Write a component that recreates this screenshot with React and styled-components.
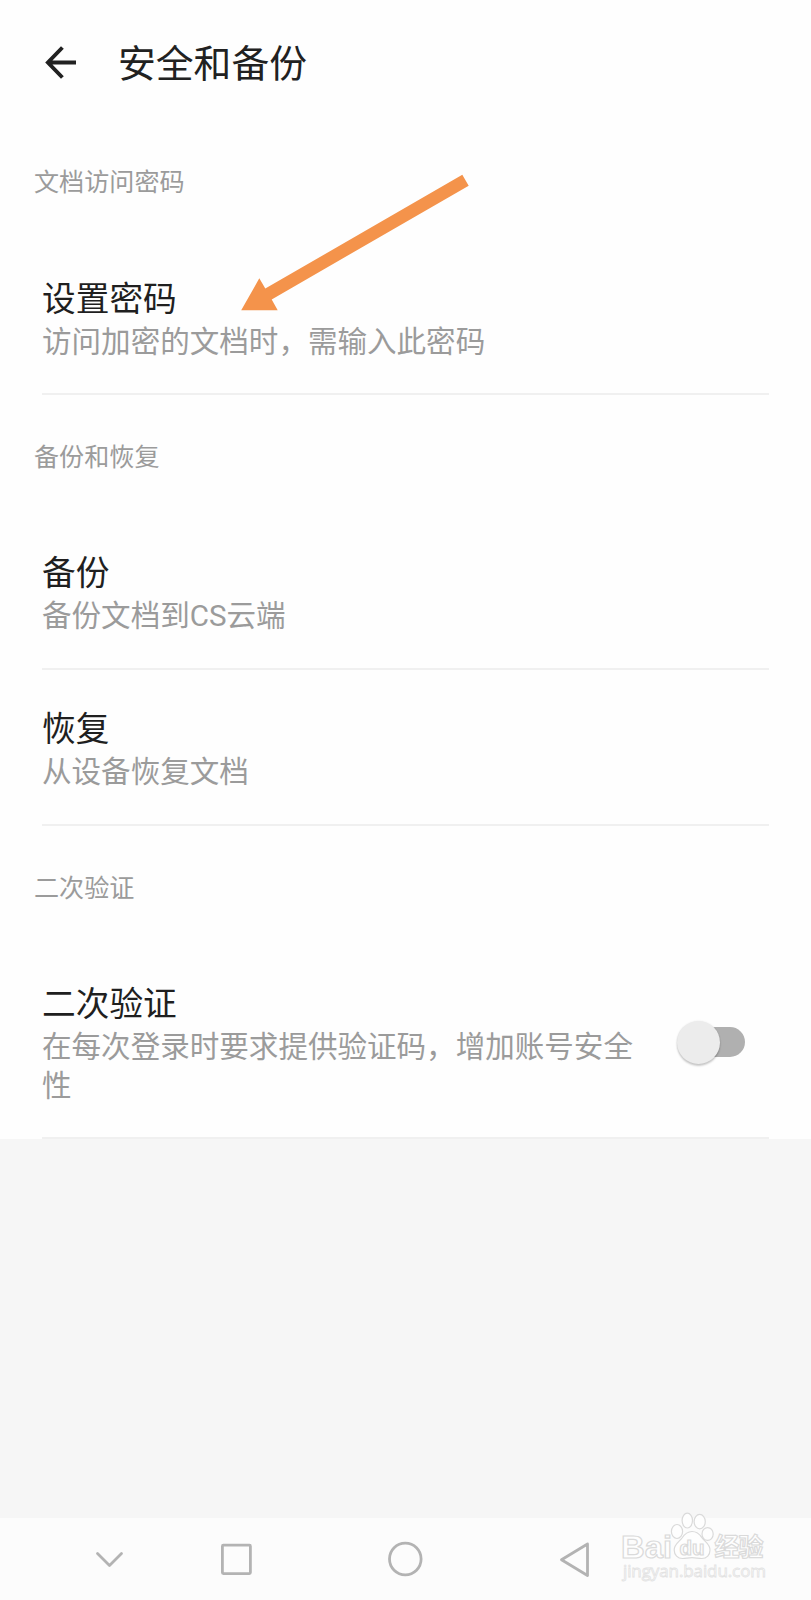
import React from "react";
import styled, { createGlobalStyle } from "styled-components";

const GlobalStyle = createGlobalStyle`
  * { box-sizing: border-box; }
  html, body { margin: 0; padding: 0; }
  body {
    background: #f6f6f6;
    font-family: Roboto, "Noto Sans CJK SC", sans-serif;
    font-weight: 400;
  }
`;

const Screen = styled.div`
  position: relative;
  display: flex;
  flex-direction: column;
  width: 811px;
  height: 1600px;
  overflow: hidden;
  background: #f6f6f6;
`;

const Panel = styled.main`
  display: flex;
  flex-direction: column;
  height: 1139px;
  flex: none;
  background: #fefefe;
`;

const Header = styled.header`
  display: flex;
  align-items: center;
  gap: 40px;
  height: 120px;
  padding: 5px 45px 0 44px;
  flex: none;
`;

const BackButton = styled.button`
  display: flex;
  width: 34px;
  height: 34px;
  padding: 0;
  border: 0;
  background: none;
`;

const Title = styled.h1`
  margin: 0;
  padding-top: 2px;
  font-size: 37.8px;
  line-height: 56px;
  font-weight: 400;
  color: #212121;
`;

const SectionLabel = styled.h2`
  height: 119px;
  margin: 0;
  padding: 45px 34px 0;
  flex: none;
  font-size: 25.1px;
  line-height: 36px;
  font-weight: 400;
  color: #9b9b9b;
`;

const Item = styled.section`
  display: flex;
  align-items: center;
  justify-content: space-between;
  flex: none;
  margin: 0 42px;
  padding: 36.6px 24px 31.8px 0;
  border-bottom: 2px solid #f0f0f0;
`;

const ItemText = styled.div`
  width: 600px;
`;

const ItemTitle = styled.div`
  font-size: 33.7px;
  line-height: 47px;
  color: #1f1f1f;
`;

const ItemDesc = styled.div`
  font-size: 29.55px;
  line-height: 38.5px;
  color: #9b9b9b;
`;

const SwitchTrack = styled.button`
  display: flex;
  align-items: center;
  width: 61px;
  height: 30px;
  margin-bottom: 2px;
  padding: 0;
  border: 0;
  border-radius: 15px;
  background: #b0b0b0;
`;

const SwitchThumb = styled.span`
  flex: none;
  width: 43px;
  height: 43px;
  margin-left: -7px;
  border-radius: 50%;
  background: #ececec;
  box-shadow: 0 2px 2px rgba(0, 0, 0, 0.2), 0 0 2px rgba(0, 0, 0, 0.1);
`;

const Filler = styled.div`
  flex: 1;
`;

const NavBar = styled.nav`
  display: flex;
  align-items: center;
  height: 82px;
  flex: none;
  padding-left: 92px;
  background: #fcfcfc;
`;

const NavButton = styled.button`
  display: flex;
  width: 36px;
  height: 40px;
  margin-right: ${(p) => p.$gap || 0}px;
  padding: 0;
  border: 0;
  background: none;
  flex: none;

  svg {
    fill: none;
    stroke: #b3b3b3;
    stroke-width: 2.8;
    stroke-linejoin: round;
    stroke-linecap: round;
  }
`;

const Pointer = styled.svg`
  position: absolute;
  left: 220px;
  top: 160px;
  pointer-events: none;
`;

const Watermark = styled.svg`
  position: absolute;
  left: 615px;
  top: 1508px;
  pointer-events: none;
  font-family: "Liberation Sans", "Noto Sans CJK SC", sans-serif;
  fill: #fefefe;
  stroke: #dadada;
  stroke-width: 1.2px;
`;

const WatermarkUrl = styled.text`
  font-family: "Open Sans", sans-serif;
  font-size: 17px;
  stroke: #e2e2e2;
  stroke-width: 0.8px;
`;

const Setting = ({ title, desc, children }) => (
  <Item>
    <ItemText>
      <ItemTitle>{title}</ItemTitle>
      <ItemDesc>{desc}</ItemDesc>
    </ItemText>
    {children}
  </Item>
);

export default function App() {
  return (
    <Screen lang="zh-CN">
      <GlobalStyle />
      <Panel>
        <Header>
          <BackButton aria-label="返回">
            <svg width="34" height="34" viewBox="0 0 34 34" fill="none" stroke="#212121" strokeWidth="3.9">
              <path d="M32 16.500H4M18.400 1.500 3.900 16.500l14.500 15" />
            </svg>
          </BackButton>
          <Title>安全和备份</Title>
        </Header>
        <SectionLabel>文档访问密码</SectionLabel>
        <Setting title="设置密码" desc="访问加密的文档时，需输入此密码" />
        <SectionLabel>备份和恢复</SectionLabel>
        <Setting title="备份" desc="备份文档到CS云端" />
        <Setting title="恢复" desc="从设备恢复文档" />
        <SectionLabel>二次验证</SectionLabel>
        <Setting title="二次验证" desc="在每次登录时要求提供验证码，增加账号安全性">
          <SwitchTrack role="switch" aria-checked="false" aria-label="二次验证">
            <SwitchThumb />
          </SwitchTrack>
        </Setting>
      </Panel>
      <Filler />
      <NavBar>
        <NavButton $gap={91} aria-label="收起">
          <svg width="36" height="40"><path d="M5.5 14.5 17.5 26.5 29.5 14.5" /></svg>
        </NavButton>
        <NavButton $gap={132} aria-label="最近任务">
          <svg width="36" height="40"><rect x="3.4" y="6.2" width="28" height="28.4" rx="1" /></svg>
        </NavButton>
        <NavButton $gap={135} aria-label="主页">
          <svg width="36" height="40"><circle cx="18.3" cy="20" r="15.8" /></svg>
        </NavButton>
        <NavButton aria-label="返回桌面">
          <svg width="36" height="40"><path d="M29.500 5 3.500 20.700 29.500 36.500Z" /></svg>
        </NavButton>
      </NavBar>
      <Pointer width="260" height="160" viewBox="0 0 260 160">
        <path fill="#f4934b" d="M242.3 14.7 248.7 25.7 51.7 139.4 57.7 150.3H21.2L39.3 118.3 45.3 128.6Z" />
      </Pointer>
      <Watermark width="160" height="80" viewBox="0 0 160 80">
        <text x="6" y="50" fontSize="32" fontWeight="700" textLength="51" lengthAdjust="spacingAndGlyphs">Bai</text>
        <ellipse cx="62" cy="23.5" rx="5.6" ry="7" />
        <ellipse cx="72.3" cy="12.6" rx="5.2" ry="7.4" />
        <ellipse cx="84.7" cy="13.6" rx="5.6" ry="7.2" />
        <ellipse cx="92.6" cy="26" rx="5.6" ry="6.4" />
        <path d="M77 23.500c-4.500 0-7.500 2.700-10 6.500-2.500 3.600-7.800 6-7.800 12 0 5 3.500 8.500 8.300 8.500 3.200 0 6-.8 9.500-.8s6.300.8 9.800.8c5 0 8.200-3.500 8.200-8.500 0-6-5.300-8.300-8.100-12.300C84.500 26 81.500 23.500 77 23.500Z" />
        <text x="64.500" y="46.500" fontSize="20" textLength="25" lengthAdjust="spacingAndGlyphs" fontWeight="700">du</text>
        <text x="99.500" y="48" fontSize="25" fontWeight="700" textLength="49">经验</text>
        <WatermarkUrl x="8" y="69" textLength="143">jingyan.baidu.com</WatermarkUrl>
      </Watermark>
    </Screen>
  );
}
